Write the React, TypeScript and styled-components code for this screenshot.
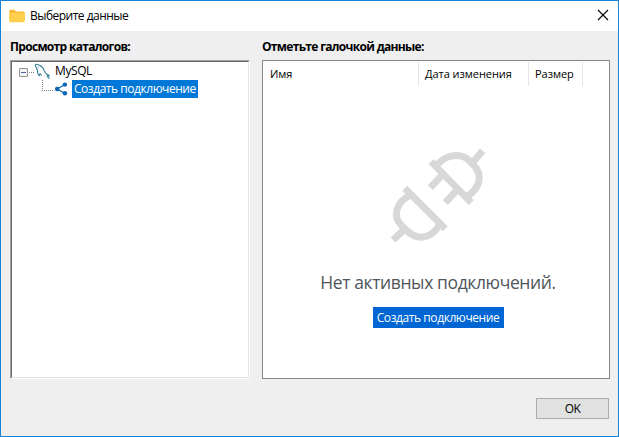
import React from "react";
import styled, { createGlobalStyle } from "styled-components";

const GlobalStyle = createGlobalStyle`
  * { box-sizing: border-box; }
  body { margin: 0; }
  svg { display: block; flex: none; }
`;

const Dialog = styled.div`
  width: 619px;
  height: 437px;
  display: flex;
  flex-direction: column;
  border: 1px solid #1883d7;
  background: #efefef;
  color: #000;
  font: 12px/16px "Open Sans", "Noto Sans", sans-serif;
  white-space: nowrap;
  overflow: hidden;
`;

const TitleBar = styled.header`
  height: 30px;
  flex: none;
  display: flex;
  align-items: center;
  padding: 0 9px 0 8px;
  background: #fff;
`;

const Title = styled.h1`
  margin: 0 auto 0 4px;
  font-size: 12px;
  font-weight: 400;
  letter-spacing: -0.52px;
`;

const CloseButton = styled.button`
  padding: 0 0 2px;
  border: 0;
  background: none;
`;

const Content = styled.main`
  display: grid;
  grid-template-columns: 240px 348px;
  grid-template-rows: 29px 319px;
  column-gap: 12px;
  padding-left: 9px;
`;

const Heading = styled.h2`
  margin: 0;
  padding-top: 8px;
  font-size: 12px;
  font-weight: 700;
  letter-spacing: -0.68px;
`;

const TreePanel = styled.div`
  border: 1px solid;
  border-color: #a0a0a0 #fff #fff #a0a0a0;
  background: #fff;
`;

const TreeInner = styled.div`
  height: 100%;
  border: 1px solid;
  border-color: #696969 #e3e3e3 #e3e3e3 #696969;
`;

const TreeRow = styled.div<{ $indent: number }>`
  height: 18px;
  display: flex;
  align-items: center;
  gap: 4px;
  padding-left: ${(p) => p.$indent}px;
`;

const TreeLabel = styled.span<{ $selected?: boolean }>`
  height: 18px;
  line-height: 17px;
  padding: 0 ${(p) => (p.$selected ? 2 : 1)}px;
  font-size: 12px;
  letter-spacing: ${(p) => (p.$selected ? -0.46 : -0.4)}px;
  color: ${(p) => (p.$selected ? "#fff" : "#000")};
  background: ${(p) => (p.$selected ? "#0078d7" : "transparent")};
`;

const ListPanel = styled.div`
  border: 1px solid #828790;
  background: #fff;
`;

const HeaderRow = styled.div`
  height: 25px;
  display: flex;
  padding-top: 1px;
`;

const HeaderCell = styled.div<{ $width: number; $inset: number }>`
  width: ${(p) => p.$width}px;
  border-right: 1px solid #e5e5e5;
  padding: 4px 0 0 ${(p) => p.$inset}px;
  font-size: 11px;
  line-height: 16px;
  letter-spacing: -0.05px;
`;

const EmptyState = styled.div`
  display: flex;
  flex-direction: column;
  align-items: center;
  padding: 53px 0 0 4px;
`;

const EmptyText = styled.p`
  margin: 20px 0 0;
  font-size: 17.5px;
  line-height: 26px;
  letter-spacing: -0.4px;
  color: #50565a;
`;

const CreateButton = styled.button`
  margin-top: 12px;
  width: 131px;
  height: 21px;
  padding: 0;
  border: 0;
  background: #0066d4;
  color: #fff;
  font: 12px/20px "Open Sans", "Noto Sans", sans-serif;
  letter-spacing: -0.42px;
`;

const Footer = styled.footer`
  display: flex;
  justify-content: flex-end;
  padding: 19px 9px 0 0;
`;

const OkButton = styled.button`
  width: 73px;
  height: 21px;
  padding: 0;
  border: 1px solid #adadad;
  background: #e1e1e1;
  color: #000;
  font: 12px/18px "Open Sans", "Noto Sans", sans-serif;
  letter-spacing: -0.6px;
`;

const FolderIcon = () => (
  <svg width="17" height="14" viewBox="0 0 17 14">
    <path d="M.3 2.2Q.3.8 1.5.8h3.8l1.7 1.7H14.6q1.2 0 1.2 1.2V11H.3z" fill="#f4b930" />
    <path d="M.7 3.7h13.9q1.2 0 1.2 1.2V12q0 1.2-1.2 1.2H1.5Q.3 13.2.3 12V4.3z" fill="#ffd04d" />
  </svg>
);

const CloseIcon = () => (
  <svg width="12" height="12" viewBox="0 0 12 12">
    <path d="M1 1l10 10M11 1L1 11" stroke="#000" strokeWidth="1.1" />
  </svg>
);

const RootBranchIcon = () => (
  <svg width="31" height="18" viewBox="0 0 31 18">
    <rect x=".5" y="6.5" width="8" height="8" rx=".5" fill="#f5f5f5" stroke="#919191" />
    <path d="M2 10.5h5" stroke="#4b63a7" />
    <path d="M10 10.5h6" stroke="#808080" strokeDasharray="1 1" />
    <g fill="none" stroke="#38809c" strokeWidth="1.1" strokeLinejoin="round">
      <path d="M20.3 14L18.8 11.8 18.4 8 16.6 4.3Q15.8 2.1 17.7 2.3L20 3.1Q23.5 4 25.3 8.8L26.9 11.5 30.4 13.8 28 14 30.4 16.5" />
      <path d="M20.3 14l.6-2.3 1.8 1.6" />
    </g>
    <circle cx="19.2" cy="5.4" r=".5" fill="#38809c" />
  </svg>
);

const ShareBranchIcon = () => (
  <svg width="26" height="18" viewBox="0 0 26 18">
    <path d="M.5 0v11" stroke="#808080" strokeDasharray="1 1" />
    <path d="M2 10.5h9" stroke="#808080" strokeDasharray="1 1" />
    <path d="M23 4.5l-8 4.5 8 4.5" fill="none" stroke="#0b66b5" strokeWidth="1.2" />
    <g fill="#0b66b5">
      <circle cx="15.2" cy="9" r="2.3" />
      <circle cx="22.9" cy="4.6" r="2.2" />
      <circle cx="22.9" cy="13.2" r="2.2" />
    </g>
  </svg>
);

const PlugIcon = () => (
  <svg width="120" height="110" viewBox="-4 0 360 330" fill="none" stroke="#d8d8d8" strokeWidth="21">
    <path d="M155 68L276 191M187 110L153 146M234 152L198 191M279 72L310 35" />
    <path d="M172 80C195 49 243 38 270 65L282 77C310 107 306 145 260 175" />
    <path d="M76 148L198 269M78 268L41 303" />
    <path d="M91 170C52 188 38 231 66 259L80 273C112 304 151 303 179 260" />
  </svg>
);

export default function App() {
  return (
    <Dialog>
      <GlobalStyle />
      <TitleBar>
        <FolderIcon />
        <Title>Выберите данные</Title>
        <CloseButton aria-label="Закрыть"><CloseIcon /></CloseButton>
      </TitleBar>
      <Content>
        <Heading>Просмотр каталогов:</Heading>
        <Heading>Отметьте галочкой данные:</Heading>
        <TreePanel>
          <TreeInner>
            <TreeRow $indent={7}>
              <RootBranchIcon />
              <TreeLabel>MySQL</TreeLabel>
            </TreeRow>
            <TreeRow $indent={30}>
              <ShareBranchIcon />
              <TreeLabel $selected>Создать подключение</TreeLabel>
            </TreeRow>
          </TreeInner>
        </TreePanel>
        <ListPanel>
          <HeaderRow>
            <HeaderCell $width={156} $inset={7}>Имя</HeaderCell>
            <HeaderCell $width={110} $inset={6}>Дата изменения</HeaderCell>
            <HeaderCell $width={54} $inset={6}>Размер</HeaderCell>
          </HeaderRow>
          <EmptyState>
            <PlugIcon />
            <EmptyText>Нет активных подключений.</EmptyText>
            <CreateButton>Создать подключение</CreateButton>
          </EmptyState>
        </ListPanel>
      </Content>
      <Footer>
        <OkButton>OK</OkButton>
      </Footer>
    </Dialog>
  );
}
